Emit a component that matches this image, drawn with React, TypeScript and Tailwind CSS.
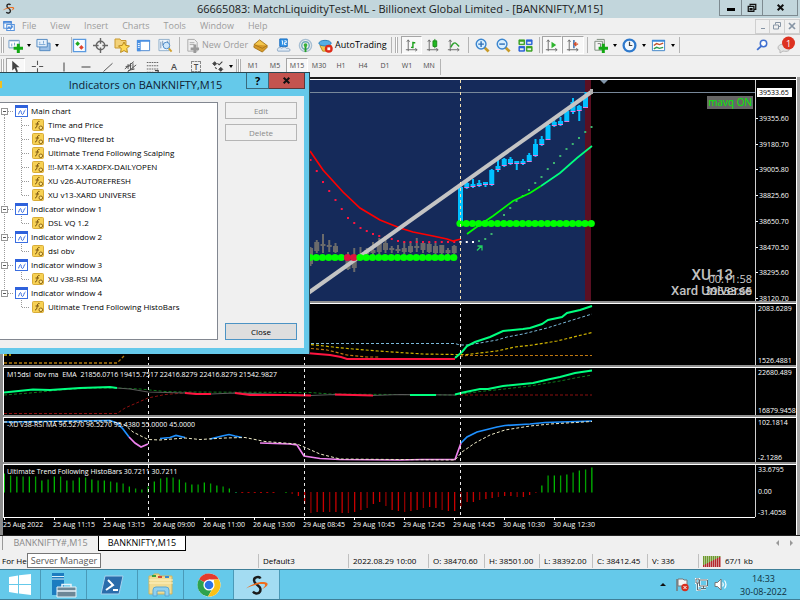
import React from "react";

const BAR = 6.25;

/* ---------- small building blocks ---------- */

function Ic({ children, s = 15 }: { children: React.ReactNode; s?: number }) {
  return (
    <svg width={s} height={s} viewBox="0 0 16 16" fill="none" className="shrink-0" aria-hidden="true">
      {children}
    </svg>
  );
}

function Tool({ label, w, on, children }: { label: string; w: string; on?: boolean; children: React.ReactNode }) {
  return (
    <button
      type="button"
      aria-label={label}
      className={`flex h-[18px] shrink-0 items-center justify-center ${w} ${
        on ? "border border-[#a5a5a5] border-r-white border-b-white bg-[#f8f8f8]" : ""
      }`}
    >
      {children}
    </button>
  );
}

function Caret({ label, w = "w-[10px]" }: { label: string; w?: string }) {
  return (
    <button type="button" aria-label={label} className={`flex h-[18px] shrink-0 items-center justify-center ${w}`}>
      <span className="border-x-2 border-t-[3px] border-x-transparent border-t-black" />
    </button>
  );
}

const Sep = ({ m }: { m: string }) => <span className={`h-4 w-px shrink-0 bg-[#b4b4b4] ${m}`} />;
const Grip = ({ m }: { m: string }) => (
  <span className={`h-4 w-[3px] shrink-0 border-x border-[#b0b0b0] bg-white ${m}`} />
);

function AppLogo({ s }: { s: number }) {
  return (
    <svg width={s} height={s} viewBox="0 0 24 24" fill="none" aria-hidden="true" className="shrink-0">
      <path d="M15.500 5.500C14.500 3 9 3.500 9 7.500c0 4 6.500 4.500 6.500 9 0 4.500-5.500 5-7.500 2" stroke="#1b1b1b" strokeWidth="2.400" />
      <path d="M1 15.500C6 10.500 18 7.500 22 10c2 1.500-1 4.500-5 6 2.500-2 4-4 2.500-4.700C16 10 8 12 1 15.500Z" fill="#ee6c1c" />
    </svg>
  );
}

const Axes = () => <path d="M4.500 2v12M2 12.500h12M3 4l1.500-2L6 4M12 11l2 1.500-2 1.500" stroke="#6a6a6a" />;
const Lens = ({ plus }: { plus?: boolean }) => (
  <>
    <path d="m10 10 4.500 4.500" stroke="#c79a28" strokeWidth="3" />
    <circle cx="6.500" cy="6.500" r="5.200" fill="#d9efff" stroke="#3c86cf" strokeWidth="1.500" />
    <path d={plus ? "M3.500 6.500h6M6.500 3.500v6" : "M3.500 6.500h6"} stroke="#2f6fb5" strokeWidth="1.500" />
  </>
);
const Plus = () => <path d="M11 6v10M6 11h10" stroke="#13a813" strokeWidth="3.200" />;

/* ---------- bars above the chart ---------- */

function TitleBar() {
  return (
    <header className="relative flex h-[18px] items-center justify-center bg-[#c2d6dc]">
      <span className="absolute left-[2px] top-[2px]"><AppLogo s={13} /></span>
      <h1 className="text-[11px] leading-[18px] text-[#1a1a1a]">
        66665083: MatchLiquidityTest-ML - Billionext Global Limited - [BANKNIFTY,M15]
      </h1>
      <div className="absolute right-[2px] top-0 flex h-4 border border-t-0 border-[#7d8a90]">
        <button type="button" aria-label="Minimize" className="flex w-[22px] items-center justify-center border-r border-[#7d8a90]">
          <span className="mt-1 h-[3px] w-2 bg-black" />
        </button>
        <button type="button" aria-label="Restore" className="flex w-[21px] items-center justify-center border-r border-[#7d8a90]">
          <Ic s={10}><path d="M5 4V2h9v8h-2M2 5.500h9v8H2zM5 9h3v1.500H5z" stroke="#111" strokeWidth="2" /></Ic>
        </button>
        <button type="button" aria-label="Close" className="flex w-[34px] items-center justify-center">
          <Ic s={9}><path d="m3 3 10 10M13 3 3 13" stroke="#111" strokeWidth="3.500" /></Ic>
        </button>
      </div>
    </header>
  );
}

function MenuBar() {
  return (
    <nav className="flex h-4 items-center bg-[#f0f0f0] text-[9px] leading-4 text-[#9c9c9c]">
      <span className="ml-[3px] mr-[7px]">
        <Ic s={12}>
          <path d="M1 3h10v8H1zM5 6h10v8H5z" fill="#fff" stroke="#5a95dd" strokeWidth="1.500" />
          <path d="M1 2h10v2H1zM6 12l2-3 2 3 2-4 1 2" stroke="#4a88d8" strokeWidth="1.500" />
        </Ic>
      </span>
      <div className="flex gap-[14px]">
        {["File", "View", "Insert", "Charts", "Tools", "Window", "Help"].map((m) => (
          <button key={m} type="button">{m}</button>
        ))}
      </div>
      <div className="ml-auto flex h-[15px]">
        <button type="button" aria-label="Minimize chart" className="flex w-[15px] items-center justify-center border border-[#cfcfcf]">
          <span className="mt-1 h-px w-1 bg-[#8795a5]" />
        </button>
        <button type="button" aria-label="Restore chart" className="flex w-[15px] items-center justify-center border border-l-0 border-[#cfcfcf]">
          <Ic s={8}><path d="M5 5V1h10v8h-4M1 6h10v8H1z" stroke="#8795a5" strokeWidth="2" /></Ic>
        </button>
        <button type="button" aria-label="Close chart" className="flex w-[15px] items-center justify-center border border-l-0 border-[#cfcfcf]">
          <Ic s={8}><path d="m2 2 12 12M14 2 2 14" stroke="#8795a5" strokeWidth="3.500" /></Ic>
        </button>
      </div>
    </nav>
  );
}

function StandardBar() {
  return (
    <div className="flex h-[21px] items-center border-t border-[#c8c8c8] bg-[#f0f0f0] text-[9px] text-black">
      <Grip m="ml-[1px] mr-[2px]" />
      <Tool label="New chart" w="w-[18px]">
        <Ic><path d="M1 2.500h11v8H1z" fill="#fff" stroke="#6b97c4" /><path d="M2 3h9M4 6v3M7 5v3" stroke="#6b97c4" /><Plus /></Ic>
      </Tool>
      <Caret label="New chart options" />
      <Tool label="Profiles" w="w-[18px]">
        <Ic><path d="M4 5.500h11v8H4z" fill="#9dc0e6" stroke="#4f86c0" /><path d="M1 1.500h11v8H1z" fill="#e6f1fc" stroke="#4f86c0" /><path d="M3 7h7M4 4v2M8 3v3" stroke="#7ba6d4" /></Ic>
      </Tool>
      <Caret label="Profile options" />
      <Sep m="ml-[9px] mr-0" />
      <Tool label="Market Watch" w="w-[15px]">
        <Ic><path d="M1.500 1.500h13v13h-13z" fill="#f7fbff" stroke="#5a9ae0" strokeWidth="1.500" /><path d="M6 3.500 8.500 6 6 8.500 3.500 6z" fill="#1da81d" /><path d="m10 7.500 2.500 2.500-2.500 2.500L7.500 10z" fill="#e0442c" /></Ic>
      </Tool>
      <Tool label="Data Window" w="w-[26px]">
        <Ic><circle cx="8" cy="8" r="4.500" stroke="#666" strokeWidth="1.500" /><path d="M8 0v6M8 10v6M0 8h6M10 8h6" stroke="#666" strokeWidth="1.500" /></Ic>
      </Tool>
      <Tool label="Navigator" w="w-[17px]">
        <Ic s={16}><path d="M1 2h5l1 1.500h5V11H1z" fill="#f3d27a" stroke="#c9992f" /><path d="m10 5 1.700 3.400 3.800.5-2.700 2.700.6 3.800L10 13.600l-3.400 1.800.6-3.800L4.500 8.900l3.800-.5z" fill="#ffd954" stroke="#b98a1c" /></Ic>
      </Tool>
      <Tool label="Terminal" w="w-[27px]">
        <Ic><path d="M1.500 2.500h13v11h-13z" fill="#fff" stroke="#4a86d0" /><path d="M1 2h14v2H1zM1 4h4v10H1z" fill="#4a90e2" /><path d="M2 6h2M2 8h2M2 10h2" stroke="#fff" /></Ic>
      </Tool>
      <Tool label="Strategy Tester" w="w-[17px]">
        <Ic><path d="M1 1.500h11v12H1z" fill="#edf4fb" stroke="#8eaecb" /><path d="M3 4v7M5 3v5M10 3v4" stroke="#7699bd" /><circle cx="9" cy="8" r="3.500" fill="#cfe7fb" stroke="#4b88c6" /><path d="m11.500 11 3 3.500" stroke="#d2a02c" strokeWidth="2" /></Ic>
      </Tool>
      <Sep m="mx-[5px]" />
      <button type="button" className="flex h-[18px] shrink-0 items-center gap-[2px] text-[#9c9c9c]">
        <Ic><path d="M3 1.500h7l3 3V14H3z" fill="#efefef" stroke="#aaa" /><path d="M5 5h5M5 7h5" stroke="#aaa" /><path d="M10.500 7v9M6 11.500h9" stroke="#9a9a9a" strokeWidth="3" /></Ic>
        New Order
      </button>
      <Tool label="MetaEditor" w="w-[24px]">
        <Ic><path d="m1 7 6-5 8 6-5 6z" fill="#f3c64c" stroke="#a8761b" /><path d="m1 7 9 4 5-3M1 8v2l9 5 5-5V8" stroke="#a8761b" fill="#d89a28" /></Ic>
      </Tool>
      <Tool label="Options" w="w-[22px]">
        <Ic><path d="M4 1h8v8H4z" fill="#2f93e8" stroke="#1d6fc0" /><path d="M6 3h1v4M9 3h2v2H9v2h2" stroke="#fff" /><path d="M2 14c-2-3 2-5 4-3 2-2 5-1 5 0 4-1 5 3 3 3z" fill="#dfeaf5" stroke="#8ba7c4" /></Ic>
      </Tool>
      <Tool label="Signals" w="w-[22px]">
        <Ic><circle cx="8" cy="8" r="6.500" stroke="#a8bfd2" strokeWidth="1.500" /><circle cx="8" cy="8" r="4" stroke="#6ea9b8" strokeWidth="1.500" /><path d="M8 7v8" stroke="#28a028" strokeWidth="2" /><circle cx="8" cy="7.500" r="2" fill="#38b238" /></Ic>
      </Tool>
      <button type="button" className="ml-[2px] flex h-[18px] shrink-0 items-center gap-[2px]">
        <Ic><path d="M2 8h12l-2 6H5z" fill="#f3c64c" stroke="#ba8a22" /><ellipse cx="7.500" cy="5.500" rx="6.500" ry="3" fill="#56aee6" stroke="#2c7fb9" /><circle cx="11.500" cy="11.500" r="4.200" fill="#df2a18" /><path d="M10 10h3v3h-3z" fill="#fff" /></Ic>
        AutoTrading
      </button>
      <Sep m="ml-[4px]" />
      <Grip m="mx-[3px]" />
      <Tool label="Bar Chart" w="w-[21px]" on>
        <Ic><Axes /><path d="M9.500 4v7M7.500 10h2M9.500 5h2.500" stroke="#1ba01b" strokeWidth="1.500" /></Ic>
      </Tool>
      <Tool label="Candlesticks" w="w-[21px]"><Ic><Axes /><path d="M10.500 1v10" stroke="#178a17" /><path d="M8.500 3h4v6h-4z" fill="#1fb81f" stroke="#178a17" /></Ic></Tool>
      <Tool label="Line Chart" w="w-[22px]"><Ic><Axes /><path d="M5 10c2-4 4-6 6-4l3 3" stroke="#2ca02c" strokeWidth="1.500" /></Ic></Tool>
      <Sep m="mx-[3px]" />
      <Tool label="Zoom In" w="w-[21px]"><Ic><Lens plus /></Ic></Tool>
      <Tool label="Zoom Out" w="w-[22px]"><Ic><Lens /></Ic></Tool>
      <Tool label="Tile Windows" w="w-[22px]">
        <Ic><path d="M1 2h6v5H1zM9 9h6v5H9z" fill="#3aa021" stroke="#3aa021" /><path d="M9 2h6v5H9zM1 9h6v5H1z" fill="#2860d8" stroke="#2860d8" /><path d="M2 4h4v2H2zM10 4h4v2h-4zM2 11h4v2H2zM10 11h4v2h-4z" fill="#e8f4e8" /></Ic>
      </Tool>
      <Sep m="mx-[2px]" />
      <Tool label="Auto Scroll" w="w-[20px]" on><Ic><Axes /><path d="m8 4 5 3.500L8 11z" fill="#2fb52f" /></Ic></Tool>
      <Tool label="Chart Shift" w="w-[22px]" on><Ic><Axes /><path d="M9.500 2v9" stroke="#2f64a8" strokeWidth="1.500" /><path d="M14 6.500h-4M12 4.500l-2 2 2 2" stroke="#d4502b" strokeWidth="1.500" /></Ic></Tool>
      <Sep m="mx-[3px]" />
      <Tool label="Indicators" w="w-[20px]"><Ic><path d="M2 3.500h8V13H2zM4 1.500h8V11" fill="#f5f5f5" stroke="#7b8a7b" /><path d="M5 6h3v5" stroke="#777" /><Plus /></Ic></Tool>
      <Caret label="Indicator options" w="w-[8px]" />
      <Tool label="Periods" w="w-[21px]"><Ic><circle cx="8" cy="8" r="6.300" fill="#f2f9ff" stroke="#2e79cc" strokeWidth="2.400" /><path d="M8 4v4h3" stroke="#444" strokeWidth="1.300" /></Ic></Tool>
      <Caret label="Period options" w="w-[8px]" />
      <Tool label="Templates" w="w-[21px]"><Ic><path d="M1.500 2.500h13v11h-13z" fill="#fff" stroke="#3c82c8" /><path d="M1 2h14v2H1z" fill="#3c8ad8" /><path d="m3 8 3-2 3 1 4-1.500" stroke="#c2522c" strokeWidth="1.500" /><path d="m3 11.500 3-1.500 3 1 4-1" stroke="#2d9a4c" strokeWidth="1.500" /></Ic></Tool>
      <Caret label="Template options" w="w-[8px]" />
      <Sep m="ml-[2px]" />
      <div className="ml-auto flex items-center gap-[8px] pr-[4px]">
        <button type="button" aria-label="Search"><Ic s={12}><circle cx="10" cy="6" r="4.300" fill="#fff" stroke="#3f6fd0" strokeWidth="2" /><path d="m7 9.500-5.500 5" stroke="#3f6fd0" strokeWidth="2.500" /></Ic></button>
        <button type="button" aria-label="Notifications" className="flex items-center">
          <svg width="20" height="18" viewBox="0 0 20 18" aria-hidden="true">
            <path d="M2 12c0-5 9-5 11-1s-2 5-6 4l-3 2v-3q-2-.5-2-2Z" fill="#e4e4e4" stroke="#b8b8b8" />
            <circle cx="12.500" cy="7" r="6.500" fill="#dd3120" />
            <text x="12.500" y="10.500" fontSize="9" fill="#fff" textAnchor="middle">1</text>
          </svg>
        </button>
      </div>
    </div>
  );
}

function LineBar() {
  const periods = ["M5", "M15", "M30", "H1", "H4", "D1", "W1", "MN"];
  return (
    <div className="flex h-[22px] items-center border-t border-[#c8c8c8] bg-[#f0f0f0] text-[7px] text-[#4a4a4a]">
      <Grip m="ml-[1px] mr-[2px]" />
      <Tool label="Cursor" w="w-[19px]" on><Ic s={13}><path d="M4 1v12l3-3 2 5 2-1-2-5h4z" fill="#444" /></Ic></Tool>
      <Tool label="Crosshair" w="w-[25px]"><Ic s={13}><path d="M8 1v5M8 10v5M1 8h5M10 8h5" stroke="#555" strokeWidth="1.300" /></Ic></Tool>
      <span className="w-[3px] shrink-0" />
      <Tool label="Vertical Line" w="w-[22px]"><Ic s={12}><path d="M8 2v12" stroke="#555" strokeWidth="1.500" /></Ic></Tool>
      <Tool label="Horizontal Line" w="w-[22px]"><Ic s={12}><path d="M2 8h12" stroke="#555" strokeWidth="1.500" /></Ic></Tool>
      <Tool label="Trendline" w="w-[22px]"><Ic s={12}><path d="M2 14 14 3" stroke="#555" strokeWidth="1.300" /></Ic></Tool>
      <Tool label="Equidistant Channel" w="w-[22px]"><Ic s={13}><path d="M1 11 12 2M4 15 15 6M5 5v6M8 4v8M11 4v8M2 8l7-1M5 13l8-2" stroke="#555" strokeWidth="1.200" /></Ic></Tool>
      <Tool label="Fibonacci Retracement" w="w-[22px]"><Ic s={13}><path d="M1 3h14M1 7h14M1 11h14M1 15h8" stroke="#666" strokeDasharray="2 1" strokeWidth="1.300" /><path d="M11 13h4v3" stroke="#444" strokeWidth="1.500" /></Ic></Tool>
      <Tool label="Text" w="w-[22px]"><span className="text-[9px] font-semibold">A</span></Tool>
      <Tool label="Text Label" w="w-[22px]"><span className="border border-dashed border-[#888] px-[2px] text-[8px] leading-[9px] font-semibold">T</span></Tool>
      <Tool label="Arrows" w="w-[20px]"><Ic s={13}><path d="M4.500 2 7 4.500 4.500 7 2 4.500zM12 9l2.500 2.500L12 14l-2.500-2.500z" fill="#444" stroke="#444" /><path d="m5 9 2 2M11 5l2-2M8 4l2 2 4-4" stroke="#444" strokeWidth="1.300" /></Ic></Tool>
      <Caret label="Arrow options" w="w-[7px]" />
      <Sep m="ml-[2px]" />
      <Grip m="mx-[1px]" />
      <Tool label="M1" w="w-[22px]">M1</Tool>
      {periods.map((p) => (
        <Tool key={p} label={p} w="w-[22px]" on={p === "M15"}>{p}</Tool>
      ))}
      <Sep m="" />
    </div>
  );
}

/* ---------- chart ---------- */

function Plot({ top, h, main, children }: { top: number; h: string; main?: boolean; children: React.ReactNode }) {
  return (
    <svg className={`min-w-0 flex-1 ${h}`} aria-hidden="true">
      <g transform={`translate(-4 ${-top})`}>
        {children}
        {!main && <path d="M148.500 303v215M304.500 303v215" stroke="#e8e8e8" strokeWidth="1" strokeDasharray="3 3" />}
        <path d="M460.500 80v438" stroke={main ? "#f0deb0" : "#e8e8e8"} strokeWidth="1" strokeDasharray="3 3" />
      </g>
    </svg>
  );
}

const L = ({ p, c, w = 2, dash }: { p: string; c: string; w?: number; dash?: string }) => (
  <polyline points={p} fill="none" stroke={c} strokeWidth={w} strokeDasharray={dash} />
);

// [bar offset from the day open, wick high, wick low, body top, body bottom]
const GREY: number[][] = [
  [-24, 247, 266, 248, 264], [-23, 240, 253, 242, 251], [-22, 234, 253, 244, 246], [-21, 240, 252, 245, 247],
  [-20, 243, 253, 246, 252], [-18, 252, 270, 260, 269], [-17, 248, 272, 257, 268], [-16, 247, 258, 254, 256],
  [-15, 248, 258, 250, 254], [-14, 242, 255, 250, 253], [-13, 238, 254, 243, 252], [-12, 238, 253, 243, 250],
  [-11, 246, 253, 248, 250], [-10, 245, 253, 249, 251], [-9, 242, 254, 248, 252], [-8, 242, 253, 246, 252],
  [-7, 238, 252, 246, 248], [-6, 242, 253, 243, 250], [-5, 242, 253, 244, 252], [-4, 243, 254, 246, 253],
  [-3, 245, 254, 245, 253], [-2, 248, 255, 250, 253], [-1, 245, 254, 246, 253],
];
const BLUE: number[][] = [
  [0, 186, 223, 187, 222], [1, 182, 189, 183, 187], [2, 179, 188, 184, 186], [3, 180, 187, 183, 185],
  [4, 182, 187, 182, 184], [5, 169, 186, 170, 184], [6, 160, 172, 166, 169], [7, 158, 167, 159, 165],
  [8, 157, 165, 159, 163], [9, 161, 170, 161, 163], [10, 159, 165, 161, 163], [11, 153, 162, 155, 161],
  [12, 139, 157, 144, 155], [13, 136, 146, 139, 144], [14, 124, 139, 125, 139], [15, 120, 127, 122, 125],
  [16, 117, 126, 121, 124], [17, 109, 122, 111, 121], [18, 98, 114, 102, 111], [19, 105, 121, 106, 110],
  [20, 92, 108, 95, 107],
];
const RED_DOTS = [160, 171, 182, 191, 200, 209, 218, 223, 228, 231, 234, 236, 237, 239, 241, 242, 242, 242, 242, 242, 242, 242, 242, 242];
const GREEN_DOTS = [241, 239, 234, 223, 215, 208, 201, 196, 190, 183, 177, 169, 163, 156, 149, 144, 138, 132, 127];

function Candles({ rows, color, foot }: { rows: number[][]; color: string; foot?: string }) {
  return (
    <>
      {rows.map(([i, hi, lo, t, b]) => {
        const x = 460.5 + i * BAR;
        return (
          <g key={i}>
            <path d={`M${x} ${hi}V${lo}`} stroke={color} strokeWidth="2" />
            <rect x={x - 2.5} y={t} width="5" height={b - t} fill={color} />
            {foot && i > 0 && <rect x={x - 2.5} y={b} width="5" height="1" fill={foot} />}
          </g>
        );
      })}
    </>
  );
}

function MainPlot() {
  const greens = Array.from({ length: 24 }, (_, k) => k - 24);
  return (
    <Plot top={80} h="min-h-[221px]" main>
      <rect x="4" y="80" width="581" height="3000" fill="#152a5a" />
      <rect x="585" y="80" width="6" height="3000" fill="#5a0f22" />
      <rect x="4" y="92" width="100%" height="1" fill="#78889a" />
      <path d="M600 80h8l-4 4z" fill="#8296aa" />
      <Candles rows={GREY} color="#6b6b6b" />
      <Candles rows={BLUE} color="#00bfff" foot="#e07be0" />
      {RED_DOTS.map((y, k) => <rect key={k} x={309.5 + k * BAR} y={y - 1} width="2" height="2" fill="#ff1440" />)}
      {[0, 1, 2].map((k) => <rect key={k} x={459.5 + k * BAR} y="241" width="2" height="2" fill="#fff" />)}
      {GREEN_DOTS.map((y, k) => <rect key={k} x={478 + k * BAR} y={y - 1} width="2" height="2" fill="#3cb371" />)}
      <L c="#ff0000" w={1.7} p="310,151 323,170 343,192 360,208 380,220 400,228 413,232 433,236 447,239 453,241 461,239" />
      <L c="#00ff00" w={1.7} p="467,234 478,226 493,216 513,201 530,193 541,186" />
      <L c="#00ff7f" w={1.7} p="541,186 560,173 577,158 592,146" />
      <L c="#c4c4c4" w={4} p="304,296 592,91.500" />
      <rect x="590" y="89" width="3" height="5" fill="#b0b0b0" />
      {greens.map((i) => (
        <circle key={i} cx={460 + i * BAR} cy="257.500" r="3.600" fill={i === -18 || i === -17 ? "#dc143c" : "#00ff00"} />
      ))}
      {Array.from({ length: 22 }, (_, i) => <circle key={i} cx={460 + i * BAR} cy="223.500" r="3.600" fill="#00ff00" />)}
      <path d="M477 250.500l4.500-4.500M477.500 246h4.500v4.500" fill="none" stroke="#22d060" strokeWidth="1.300" />
    </Plot>
  );
}

const UP = [19, 17, 16, 16, 16, 16, 12, 13, 16, 16, 12, 12, 15, 15, 13, 12, 12, 11, 10, 9, 6, 4, 3, 6, 11, 14, 15, 15, 13, 10, 8, 8, 10, 9, 7, 6, 4];
const FLAT = ["#063", "#a00", "#a00", "#a00", "#a00", "#a00", "#a00", "", "#060"];
const DOWN = [2, 4, 12, 21, 20, 20, 20, 20, 21, 21, 20, 18, 16, 12, 10, 14, 18, 19, 20, 19, 18, 16, 15, 16, 18, 19, 19, 15, 10, 10, 8, 7, 6, 5, 4, 4, 5, 5, 3, 1];
const UP2 = [7, 17, 17, 17, 18, 20, 22, 23, 25];

function HistoPlot() {
  return (
    <Plot top={465} h="h-[52px]">
      {UP.map((v, k) => <rect key={k} x={3.7 + k * BAR} y={492.5 - v} width="1.300" height={v} fill={k % 2 ? "#00a000" : "#00b800"} />)}
      {FLAT.map((c, k) => c && <rect key={k} x={235 + k * BAR} y="492" width="2" height="1" fill={c} />)}
      {DOWN.map((v, k) => <rect key={k} x={291.5 + k * BAR} y="492" width="1.300" height={v} fill={k % 3 ? "#c80000" : "#8e0000"} />)}
      {UP2.map((v, k) => <rect key={k} x={541.2 + k * BAR} y={492.5 - v} width="1.300" height={v} fill={k % 2 ? "#00a000" : "#00b800"} />)}
    </Plot>
  );
}

const PRICES = ["39355.60", "39180.70", "39005.80", "38825.60", "38650.70", "38470.50", "38295.60", "38120.70"];
const TIMES = ["25 Aug 2022", "25 Aug 11:15", "25 Aug 13:15", "26 Aug 09:00", "26 Aug 11:00", "26 Aug 13:00", "29 Aug 08:45", "29 Aug 10:45", "29 Aug 12:45", "29 Aug 14:45", "30 Aug 10:30", "30 Aug 12:30"];

const AXIS = "relative flex w-[41px] shrink-0 flex-col justify-between whitespace-nowrap border-l border-[#d0d0d0] leading-[9px]";
const PANE = "relative flex border-t border-l border-white";

function SubPane({ caption, labels, children }: { caption?: string; labels: string[]; children: React.ReactNode }) {
  return (
    <section className="border-t-2 border-[#909090]">
      <div className={PANE}>
        {children}
        {caption && <p className="absolute left-[3px] top-[2px] whitespace-pre leading-[10px]">{caption}</p>}
        <div className={`${AXIS} pl-[2px]`}>
          {labels.map((l) => <span key={l}>{l}</span>)}
        </div>
      </div>
    </section>
  );
}

function Chart() {
  return (
    <main className="flex flex-1 border-l-[3px] border-[#8c8c8c] bg-black text-[7px] text-white">
      <div className="flex min-w-0 flex-1 flex-col overflow-hidden border-t-2 border-[#1c1c1c]">
        <section className={`${PANE} flex-1`}>
          <MainPlot />
          <span className="absolute right-[43px] top-[16px] bg-[#666] px-[1px] text-[10px] leading-[13px] text-[#00f000]">mavq ON</span>
          <div className="absolute bottom-[3px] right-[44px] text-right font-['Roboto'] text-[13px] leading-[15px] font-medium text-[#c0c0c0]">
            <p className="pr-[19px] text-[15px]">XU-13</p>
            <p>Xard Universe</p>
          </div>
          <div className="absolute bottom-[4px] right-[44px] text-right text-[11px] leading-[12px] text-[#d0d0d0]">
            <p>00:11:58</p>
            <p>39533.65</p>
          </div>
          <div className={`${AXIS} pt-[8px]`}>
            <span className="ml-[1px] w-[35px] bg-white pl-[2px] text-black">39533.65</span>
            {PRICES.map((p) => (
              <span key={p} className="flex items-center gap-[1px] last:-mb-[2px]"><i className="h-px w-[2px] bg-white" />{p}</span>
            ))}
          </div>
        </section>

        <SubPane labels={["2083.6289", "1526.4881"]}>
          <Plot top={304} h="h-[61px]">
            <L c="#b07a10" w={1.3} dash="3 2" p="4,363 117,363 124,356" />
            <L c="#d0b400" w={1.3} dash="3 2" p="4,355 11,355" />
            <L c="#7ab8d8" w={1} dash="3 2" p="306,343.500 455,343.500 460,345 467,345 480,343 497,340 507,337 523,334 547,328 563,323 592,314" />
            <L c="#d0b400" w={1.2} dash="3 2" p="306,344 333,347 353,349 378,351 400,352.500 423,354 455,354.500 467,354.500 497,351 515,347 533,345 557,341 592,332.500" />
            <L c="#c07810" w={1.2} dash="3 2" p="306,348 327,350 347,355 367,357 380,357" />
            <L c="#c07810" w={1.2} dash="3 2" p="455,356.500 467,355.500 592,355.500" />
            <L c="#ff1440" w={2} p="306,353 330,355 341,357 347,359 455,359" />
            <L c="#00ff7f" w={2} p="455,358 462,352 467,346 475,342 490,337 503,331 513,330 523,329 530,328 542,324 548,320 562,317 567,313 580,310 592,306" />
          </Plot>
        </SubPane>

        <SubPane labels={["22680.489", "16879.9458"]} caption="M15dsl  obv ma  EMA  21856.0716 19415.7517 22416.8279 22416.8279 21542.9827">
          <Plot top={368} h="h-[47px]">
            <L c="#0d7a1c" w={1} dash="3 2" p="4,395 30,393 60,390 90,388 117,388 140,389 165,391.500 185,392 310,392.500 330,394 455,395 480,391.500 500,389.500 530,386 560,381 575,378 592,375" />
            <L c="#8c1010" w={1} dash="3 2" p="4,413.500 117,413.500 125,408 148,398 165,394.500 185,393" />
            <L c="#8c1010" w={1} dash="3 2" p="460,395 592,395" />
            <L c="#5a5a5a" w={1.2} p="117,388 130,389 148,392 185,393 211,394 235,393 311,395.500 335,394.500 373,395.500 400,394.500 455,395" />
            <L c="#00ff7f" w={2} p="4,392.500 33,389.500 50,390 80,388 110,387 117,388" />
            <L c="#ff1440" w={2} p="185,393 196,394 211,394" />
            <L c="#ff1440" w={2} p="235,393 250,395 283,395 311,395.500" />
            <L c="#ff1440" w={2} p="335,394.500 373,395.500" />
            <L c="#00ff7f" w={2} p="410,395 436,395" />
            <L c="#00ff7f" w={2} p="455,394.500 463,392.500 480,389 488,389 503,386 533,383 548,379.500 560,377 575,373 592,370.500" />
          </Plot>
        </SubPane>

        <SubPane labels={["102.1814", "-2.1286"]} caption="-XU v38-RSI MA 96.5270 96.5270 95.4380 55.0000 45.0000">
          <Plot top={418} h="h-[44px]">
            <L c="#1e90ff" w={1.7} p="4,422 110,420.500 117,423 123,429 129,437" />
            <L c="#ee82ee" w={1.7} p="129,437 135,443 141,447 148,444" />
            <L c="#1e90ff" w={1.7} p="160,438.500 170,437.500 176,435.500 185,437.500" />
            <L c="#1e90ff" w={1.7} p="210,439 222,436 229,434.500 235,436 242,437.500" />
            <L c="#ee82ee" w={1.7} p="260,443 290,444 297,445 304,456 320,458.500 340,459.500 400,460 422,459.500 455,459.500 461,443" />
            <L c="#1e90ff" w={1.7} p="461,443 467,437 477,432 497,427 505,425.500 530,424 545,422.500 592,421" />
            <L c="#f0ecc8" w={1} dash="3 2" p="4,422 110,421 125,425 133,432 148,439.500 160,440 185,438 200,439.500 225,438 245,437.500 265,441.500 297,444 304,447 320,454 340,459 455,460 462,452 475,443 490,435 505,430 530,426 550,424 592,421.500" />
          </Plot>
        </SubPane>

        <SubPane labels={["33.6795", "0.00", "-31.4058"]} caption="Ultimate Trend Following HistoBars 30.7211 30.7211">
          <HistoPlot />
        </SubPane>

        <ol className="mr-[41px] flex h-[18px] overflow-hidden border-t border-white">
          {TIMES.map((t) => (
            <li key={t} className="w-[50px] shrink-0 whitespace-nowrap leading-[9px]">
              <i className="ml-[1px] block h-[2px] w-px bg-white" />
              {t}
            </li>
          ))}
        </ol>
      </div>
      <div className="w-[4px] border-l border-white bg-[#a6a6a6]" />
    </main>
  );
}

/* ---------- indicators dialog ---------- */

const TREE: [string, string[]][] = [
  ["Main chart", ["Time and Price", "ma+VQ filtered bt", "Ultimate Trend Following Scalping", "!!!-MT4 X-XARDFX-DAILYOPEN", "XU v26-AUTOREFRESH", "XU v13-XARD UNIVERSE"]],
  ["Indicator window 1", ["DSL VQ 1.2"]],
  ["Indicator window 2", ["dsl obv"]],
  ["Indicator window 3", ["XU v38-RSI MA"]],
  ["Indicator window 4", ["Ultimate Trend Following HistoBars"]],
];

function Dialog() {
  return (
    <div role="dialog" aria-labelledby="dlg-title" className="absolute left-0 top-[72px] w-[310px] border-t border-r border-[#2a4650] bg-[#65c9ea] pb-[6px] pr-[5px]">
      <div className="relative flex h-[23px] items-center">
        <span className="h-[7px] w-[2px] bg-[#f0c020]" />
        <h2 id="dlg-title" className="w-full pr-[15px] text-center text-[11px] leading-[22px] text-[#123]">Indicators on BANKNIFTY,M15</h2>
        <div className="absolute -right-px top-0 flex h-4">
          <button type="button" aria-label="Help" className="w-[23px] border border-t-0 border-[#3a6a7c] text-[11px] leading-[14px] font-bold text-black">?</button>
          <button type="button" aria-label="Close dialog" className="flex w-[36px] items-center justify-center border border-t-0 border-l-0 border-[#5a3a3c] bg-[#c4544f]">
            <Ic s={9}><path d="m3 3 10 10M13 3 3 13" stroke="#111" strokeWidth="3.500" /></Ic>
          </button>
        </div>
      </div>
      <div className="flex bg-[#f0f0f0] pt-[6px] pb-[8px] pr-[7px]">
        <ul className="h-[238px] w-[218px] overflow-hidden border border-l-0 border-[#828790] bg-white pt-[1px] text-[8px] text-black">
          {TREE.map(([name, kids], n) => (
            <li key={name}>
              <div className="flex h-[14px] items-center">
                <svg width="15" height="14" className="shrink-0" aria-hidden="true">
                  <path d={`M4.500 ${n === 0 ? 7 : 0}V${n === TREE.length - 1 ? 7 : 14}M8 7.500h6`} stroke="#9a9a9a" strokeDasharray="1 1" />
                  <rect x="1.500" y="4.500" width="6" height="6" fill="#fff" stroke="#969696" />
                  <path d="M3 7.500h3" stroke="#555" />
                </svg>
                <svg width="13" height="12" viewBox="0 0 13 12" className="shrink-0" aria-hidden="true">
                  <rect x=".5" y=".5" width="12" height="11" fill="#fff" stroke="#3a6ee0" />
                  <path d="M0 0h13v3H0z" fill="#2f62dc" />
                  <path d="M3 9.500c1 0 1.500-4 2.500-4s.5 4 2 4 1-4 3-4.500" fill="none" stroke="#3a6ee0" />
                </svg>
                <span className="pl-[3px]">{name}</span>
              </div>
              <ul>
                {kids.map((k, i) => (
                  <li key={k} className="flex h-[14px] items-center">
                    <svg width="32" height="14" className="shrink-0" aria-hidden="true">
                      <path d={`M21.500 0V${i === kids.length - 1 ? 8 : 14}M22 7.500h8${n < TREE.length - 1 ? "M4.500 0V14" : ""}`} stroke="#9a9a9a" strokeDasharray="1 1" />
                    </svg>
                    <svg width="12" height="12" viewBox="0 0 12 12" className="shrink-0" aria-hidden="true">
                      <rect x=".5" y=".5" width="11" height="11" rx="1" fill="#f7d154" stroke="#d8ac38" />
                      <path d="M7.500 2.500c-2-.5-2 1-2.300 3S4.500 9 3 9M3.500 5h3.500" fill="none" stroke="#7a5410" />
                      <circle cx="8.800" cy="8.800" r="1.800" fill="#ffe68a" stroke="#8a6214" />
                    </svg>
                    <span className="pl-[4px]">{k}</span>
                  </li>
                ))}
              </ul>
            </li>
          ))}
        </ul>
        <div className="ml-[7px] flex flex-1 flex-col gap-[5px] text-[8px]">
          <button type="button" disabled className="h-[17px] border border-[#b5b5b5] bg-[#f1f1f1] text-[#8a8a8a]">Edit</button>
          <button type="button" disabled className="h-[17px] border border-[#b5b5b5] bg-[#f1f1f1] text-[#8a8a8a]">Delete</button>
          <button type="button" className="mt-auto h-[17px] border border-[#4c93c4] bg-[#dedede] text-black">Close</button>
        </div>
      </div>
    </div>
  );
}

/* ---------- bars below the chart ---------- */

function Tabs() {
  return (
    <div className="flex h-[18px] items-start border-t border-[#222] bg-[#f0f0f0] pl-[2px] text-[9px] leading-[14px]" role="tablist">
      <button type="button" role="tab" aria-selected="false" className="h-[14px] w-[96px] border-l border-[#999] text-[#8a8a8a]">BANKNIFTY#,M15</button>
      <button type="button" role="tab" aria-selected="true" className="h-[15px] w-[88px] border border-t-0 border-black bg-white text-black">BANKNIFTY,M15</button>
      <div className="ml-auto flex gap-[11px] pr-[7px] pt-[4px]">
        <button type="button" aria-label="Scroll tabs left" className="border-y-[3px] border-r-[3px] border-y-transparent border-r-[#999]" />
        <button type="button" aria-label="Scroll tabs right" className="border-y-[3px] border-l-[3px] border-y-transparent border-l-[#999]" />
      </div>
    </div>
  );
}

function StatusBar() {
  const cell = "shrink-0 border-l border-[#c0c0c0] pl-[4px]";
  return (
    <footer className="flex h-[16px] items-center whitespace-nowrap bg-[#f0f0f0] text-[8px] leading-[14px] text-black">
      <span className="min-w-0 flex-1 overflow-hidden pl-[2px]">For Help, press F1</span>
      <span className={`${cell} w-[90px]`}>Default3</span>
      <span className={`${cell} w-[80px]`}>2022.08.29 10:00</span>
      <span className={`${cell} w-[56px]`}>O: 38470.60</span>
      <span className={`${cell} w-[55px]`}>H: 38501.00</span>
      <span className={`${cell} w-[53px]`}>L: 38392.00</span>
      <span className={`${cell} w-[55px]`}>C: 38412.45</span>
      <span className={`${cell} w-[51px]`}>V: 336</span>
      <span className={`${cell} flex w-[102px] items-center gap-[4px]`}>
        <svg width="18" height="11" aria-hidden="true">
          {Array.from({ length: 9 }, (_, i) => (
            <g key={i}>
              <rect x={i * 2} y="0" width="1.500" height={9 - i} fill="#6e9a2c" />
              <rect x={i * 2} y={9 - i} width="1.500" height={2 + i} fill="#b3282c" />
            </g>
          ))}
        </svg>
        67/1 kb
      </span>
    </footer>
  );
}

function Task({ label, w, on, tip, children }: { label: string; w: string; on?: boolean; tip?: boolean; children: React.ReactNode }) {
  return (
    <button type="button" aria-label={label} className={`relative flex items-center justify-center border-r border-[#4a9ab8] ${w} ${on ? "bg-[#a3dcf2]" : ""}`}>
      {children}
      {tip && (
        <span role="tooltip" className="absolute -left-[14px] bottom-[31px] w-[74px] whitespace-nowrap border border-[#767676] bg-white text-center text-[9px] leading-[13px] text-[#575757]">
          {label}
        </span>
      )}
    </button>
  );
}

function Taskbar() {
  return (
    <div className="flex h-[31px] border-y border-[#3f7f98] bg-[#65c9ea]">
      <Task label="Start" w="w-[41px]">
        <svg width="22" height="21" viewBox="0 0 22 21" aria-hidden="true"><path d="M0 3l9-1.500V10H0zM10 1.300 22 0v10H10zM0 11h9v8.500L0 18zM10 11h12v10l-12-1.500z" fill="#fff" /></svg>
      </Task>
      <Task label="Server Manager" w="w-[46px]" tip>
        <svg width="26" height="26" viewBox="0 0 26 26" aria-hidden="true">
          <path d="M1 1h12v22H1z" fill="#1c7cc0" /><path d="M1 4.500h12M1 7h12" stroke="#d8eefa" />
          <path d="M6 15h19v10H6z" fill="#6d8796" stroke="#e8f4fa" /><path d="M11 15v-2.500h9V15M6 19h19" fill="none" stroke="#e8f4fa" strokeWidth="1.500" />
        </svg>
      </Task>
      <Task label="PowerShell" w="w-[51px]">
        <svg width="24" height="20" viewBox="0 0 24 20" aria-hidden="true"><path d="M5 1h18l-4 18H1z" fill="#2a6cab" stroke="#a8d2ee" /><path d="m8 5 5 5-7 5" fill="none" stroke="#fff" strokeWidth="2" /><path d="M13 15h5" stroke="#fff" strokeWidth="2" /></svg>
      </Task>
      <Task label="File Explorer" w="w-[46px]">
        <svg width="26" height="24" viewBox="0 0 26 24" aria-hidden="true">
          <path d="M1 3h4l1-2h5l1 2h12v18H1z" fill="#f0dc94" stroke="#d2b45c" /><path d="M1 7h24M1 10h24" stroke="#fff4c4" />
          <path d="M4 2h4v2H4z" fill="#3aa03a" /><path d="M10 3h4v2h-4z" fill="#d04a3a" /><path d="M17 3h4v2h-4z" fill="#3a8ad0" />
          <path d="M5 23v-6q0-3 3-3h10q3 0 3 3v6h-4v-5H9v5z" fill="#8fd0f0" stroke="#5aa8d4" />
        </svg>
      </Task>
      <Task label="Chrome" w="w-[50px]">
        <svg width="24" height="24" viewBox="0 0 24 24" aria-hidden="true">
          <circle cx="12" cy="12" r="11.500" fill="#fff" />
          <path d="M12 12 2 6.300A11.500 11.500 0 0 1 22 6.500H12z" fill="#e23b2e" /><path d="M2 6.300A11.500 11.500 0 0 0 11 23.500l5-9-4-2.500z" fill="#2ea24d" /><path d="M22 6.500A11.500 11.500 0 0 1 11 23.500l5.500-9L17 6.500z" fill="#fbc116" />
          <circle cx="12" cy="12" r="5.600" fill="#fff" /><circle cx="12" cy="12" r="4.300" fill="#2b72e6" />
        </svg>
      </Task>
      <Task label="Trading terminal" w="w-[46px]" on><AppLogo s={24} /></Task>
      <div className="ml-auto flex items-center gap-[6px] text-[9px] text-[#10303c]">
        <button type="button" aria-label="Show hidden icons" className="mr-[4px] border-x-[3px] border-b-[3px] border-x-transparent border-b-[#111]" />
        <svg width="13" height="14" viewBox="0 0 13 14" aria-hidden="true"><path d="M1 1v12" stroke="#777" strokeWidth="1.500" /><path d="M2 1h5l1 1h3v6H2z" fill="#f4f4f4" stroke="#777" /><circle cx="9" cy="9.500" r="3.700" fill="#d8301f" /><path d="m7.500 8 3 3m0-3-3 3" stroke="#fff" /></svg>
        <svg width="13" height="13" viewBox="0 0 13 13" fill="none" aria-hidden="true"><path d="M4.500 2h8v6h-8zM6 10.500h5M8.500 8v2M1 1h3v4H1zM2.500 5v7H6" stroke="#fff" strokeWidth="2.200" /><path d="M4.500 2h8v6h-8zM6 10.500h5M8.500 8v2M1 1h3v4H1zM2.500 5v7H6" stroke="#5a6a72" /></svg>
        <svg width="13" height="13" viewBox="0 0 13 13" fill="none" aria-hidden="true"><path d="M1 4.500h2.500L7 1v11L3.500 8.500H1z" fill="#fff" stroke="#777" /><path d="M8.500 4.500q1.500 2 0 4M10.500 2.500q3 4 0 8" stroke="#fff" strokeWidth="1.200" /></svg>
        <time className="ml-[7px] mr-[13px] text-center leading-[13px]">
          14:33<br />30-08-2022
        </time>
      </div>
    </div>
  );
}

export default function App() {
  return (
    <div className="relative flex min-h-screen w-full flex-col overflow-hidden bg-[#f0f0f0] font-['Open_Sans','Noto_Sans',sans-serif]">
      <TitleBar />
      <MenuBar />
      <StandardBar />
      <LineBar />
      <Chart />
      <Tabs />
      <StatusBar />
      <Taskbar />
      <Dialog />
    </div>
  );
}
